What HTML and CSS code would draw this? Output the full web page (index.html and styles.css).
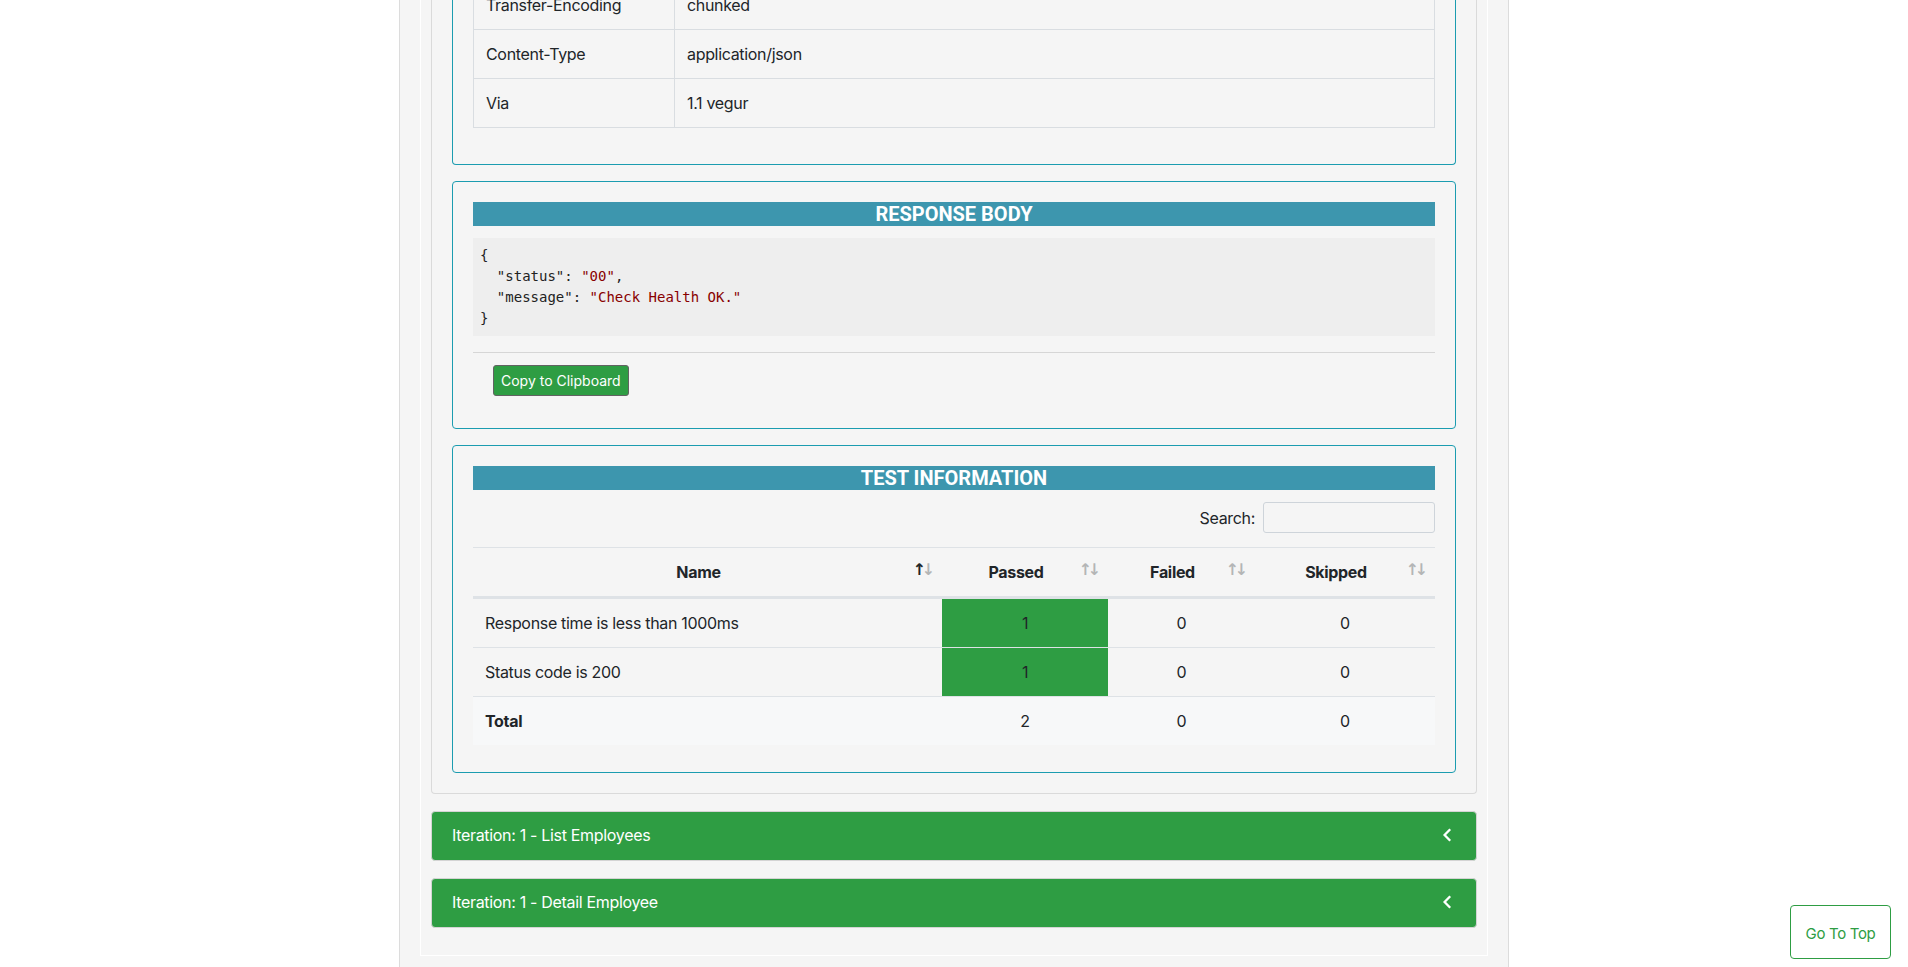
FILE: index.html
```html
<!DOCTYPE html>
<html lang="en">
<head>
<meta charset="utf-8">
<title>Newman Report</title>
<link rel="stylesheet" href="styles.css">
</head>
<body>
<div class="container">
  <div class="tab-pane">
    <div class="card card-open">
      <div class="card-body">
        <section class="info-box info-box-first">
          <table class="kv-table">
            <tbody>
              <tr><td class="kv-key">Transfer-Encoding</td><td>chunked</td></tr>
              <tr><td class="kv-key">Content-Type</td><td>application/json</td></tr>
              <tr><td class="kv-key">Via</td><td>1.1 vegur</td></tr>
            </tbody>
          </table>
        </section>

        <section class="info-box">
          <h5 class="box-title">RESPONSE BODY</h5>
          <pre class="code"><code>{
  <span class="attr">"status"</span>: <span class="str">"00"</span>,
  <span class="attr">"message"</span>: <span class="str">"Check Health OK."</span>
}</code></pre>
          <hr class="divider">
          <div class="btn-row"><button class="btn-copy" type="button">Copy to Clipboard</button></div>
        </section>

        <section class="info-box info-box-last">
          <h5 class="box-title">TEST INFORMATION</h5>
          <div class="dt-search"><label class="dt-label">Search:<input class="dt-input" type="search"></label></div>
          <table class="dt-table">
            <thead>
              <tr>
                <th class="col-name sorting sorting-asc">Name</th>
                <th class="col-passed sorting">Passed</th>
                <th class="col-failed sorting">Failed</th>
                <th class="col-skipped sorting">Skipped</th>
              </tr>
            </thead>
            <tbody>
              <tr>
                <td class="cell-name">Response time is less than 1000ms</td>
                <td class="cell-num cell-pass">1</td>
                <td class="cell-num">0</td>
                <td class="cell-num">0</td>
              </tr>
              <tr>
                <td class="cell-name">Status code is 200</td>
                <td class="cell-num cell-pass">1</td>
                <td class="cell-num">0</td>
                <td class="cell-num">0</td>
              </tr>
            </tbody>
            <tfoot>
              <tr class="total-row">
                <td class="cell-name cell-total">Total</td>
                <td class="cell-num">2</td>
                <td class="cell-num">0</td>
                <td class="cell-num">0</td>
              </tr>
            </tfoot>
          </table>
        </section>
      </div>
    </div>

    <div class="card card-iter">
      <div class="iter-header">
        <span class="iter-title">Iteration: 1 - List Employees</span>
        <svg class="chevron" width="14" height="14" viewBox="0 0 14 14" aria-hidden="true"><path d="M8.2 1.3 L2.6 7 L8.2 12.7" fill="none" stroke="#fff" stroke-width="2.3"/></svg>
      </div>
    </div>
    <div class="card card-iter">
      <div class="iter-header">
        <span class="iter-title">Iteration: 1 - Detail Employee</span>
        <svg class="chevron" width="14" height="14" viewBox="0 0 14 14" aria-hidden="true"><path d="M8.2 1.3 L2.6 7 L8.2 12.7" fill="none" stroke="#fff" stroke-width="2.3"/></svg>
      </div>
    </div>
  </div>
</div>
<a class="go-top" href="#">Go To Top</a>
</body>
</html>
```

FILE: styles.css
```css
* { box-sizing: border-box; }

html, body {
  margin: 0;
  padding: 0;
  background: #ffffff;
}

body {
  font-family: Inter, "Noto Sans", "Liberation Sans", sans-serif;
  font-size: 16px;
  line-height: 24px;
  letter-spacing: -0.02em;
  color: #212529;
}

.container {
  width: 1110px;
  margin: 0 auto;
  padding: 0 20px;
  background: #f5f5f5;
  border-left: 1px solid #dcdcdc;
  border-right: 1px solid #dcdcdc;
  min-height: calc(100vh + 40px);
}

.tab-pane {
  border: 1px solid #ffffff;
  border-top: none;
  padding: 0 10px 10px;
}

.card {
  border: 1px solid #dadada;
  border-radius: 4px;
  margin-bottom: 17px;
}

.card-open {
  border-top: none;
  border-radius: 0 0 4px 4px;
}

.card-body {
  padding: 0 20px 20px;
}

.info-box {
  border: 1px solid #1b9cb0;
  border-radius: 4px;
  padding: 20px;
  margin-bottom: 16px;
}

.info-box-first {
  border-top: none;
  border-radius: 0 0 4px 4px;
  padding-top: 0;
}

.info-box-last {
  margin-bottom: 0;
  padding-bottom: 21px;
}

/* key/value headers table */
.kv-table {
  width: 100%;
  border-collapse: collapse;
  margin: -20px 0 16px;
}

.kv-table td {
  border: 1px solid #d9dde1;
  padding: 12px;
  vertical-align: top;
}

.kv-key {
  width: 201px;
}

.box-title {
  margin: 0 0 12px;
  background: #3d96ae;
  color: #ffffff;
  text-align: center;
  font-family: Roboto, Inter, sans-serif;
  font-weight: 700;
  font-size: 20px;
  line-height: 24px;
  letter-spacing: 0;
}

.code {
  margin: 0 0 16px;
  padding: 7px;
  background: #eeeeee;
  font-family: "DejaVu Sans Mono", "Liberation Mono", monospace;
  font-size: 14px;
  line-height: 21px;
  letter-spacing: 0;
  color: #222222;
}

.code .str { color: #880000; }
.code .attr { color: #222222; }

.divider {
  margin: 0 0 12px;
  border: 0;
  border-top: 1px solid #d6d6d6;
}

.btn-row {
  padding-left: 20px;
  margin-bottom: 12px;
}

.btn-copy {
  display: inline-block;
  height: 31px;
  padding: 0 7px;
  font-family: Inter, "Liberation Sans", sans-serif;
  font-size: 14px;
  line-height: 29px;
  letter-spacing: 0;
  color: #ffffff;
  background: #2e9d43;
  border: 1px solid #626262;
  border-radius: 3px;
}

/* datatable */
.dt-search {
  margin-top: 12px;
  display: flex;
  justify-content: flex-end;
}

.dt-label {
  display: flex;
  align-items: center;
  white-space: nowrap;
}

.dt-input {
  margin-left: 8px;
  width: 172px;
  height: 31px;
  border: 1px solid #ced4da;
  border-radius: 3px;
  background: #f5f5f5;
  font-size: 14px;
}

.dt-table {
  width: 100%;
  margin: 14px 0 6px;
  border-collapse: separate;
  border-spacing: 0;
}

.dt-table th {
  position: relative;
  padding: 12px 30px 12px 12px;
  border-top: 1px solid #dee2e6;
  border-bottom: 2px solid #dee2e6;
  font-weight: 700;
  text-align: center;
}

.col-name { width: 469px; }
.col-passed { width: 166px; }
.col-failed { width: 147px; }
.col-skipped { width: 180px; }

.sorting::before,
.sorting::after {
  position: absolute;
  bottom: 14px;
  line-height: 24px;
  font-family: "DejaVu Sans", sans-serif;
  font-size: 16px;
  font-weight: 700;
  letter-spacing: 0;
  opacity: 0.3;
}

.sorting::before {
  content: "\2191";
  right: 16px;
}

.sorting::after {
  content: "\2193";
  right: 7px;
}

.sorting-asc::before {
  opacity: 1;
}

.dt-table td {
  padding: 12px;
  border-top: 1px solid #dee2e6;
}

.cell-num { text-align: center; }

.cell-pass { background: #2e9d43; }

.total-row td {
  background: #f7f8f9;
}

.cell-total { font-weight: 700; }

/* iteration bars */
.card-iter {
  background: #2e9d43;
  border-color: #d4d4d4;
}

.iter-header {
  display: flex;
  align-items: center;
  justify-content: space-between;
  padding: 11px 20px 13px;
  color: #ffffff;
}

.chevron {
  display: block;
}

.go-top {
  position: fixed;
  right: 17px;
  bottom: 8px;
  width: 101px;
  height: 54px;
  display: flex;
  align-items: center;
  justify-content: center;
  padding-top: 3px;
  background: #ffffff;
  border: 1px solid #2e9d43;
  border-radius: 4px;
  color: #2e9d43;
  font-size: 15px;
  text-decoration: none;
}
```
